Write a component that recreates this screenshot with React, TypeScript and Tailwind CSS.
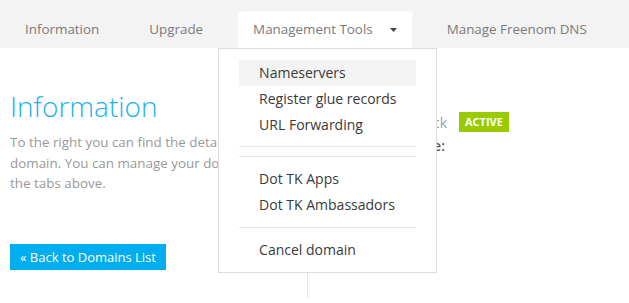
import React from "react";

const Caret = () => (
  <svg width="7" height="4" viewBox="0 0 7 4" className="block">
    <polygon points="0,0 7,0 3.5,4" fill="#444" />
  </svg>
);

const Item = ({ children, active }: { children: React.ReactNode; active?: boolean }) => (
  <div className={`h-[26px] leading-[26px] pl-[20px] text-[14px] whitespace-nowrap text-[#3a3a3a] ${active ? "bg-[#f3f3f3]" : ""}`}>
    {children}
  </div>
);

const tab = "h-[37px] px-[15px] flex items-center text-[13.4px] whitespace-nowrap text-[#7a7a7a]";

export default function App() {
  return (
    <div className="w-[629px] h-[303px] overflow-hidden bg-white" style={{ fontFamily: '"Open Sans", "Liberation Sans", sans-serif' }}>
      <div className="bg-[#f3f3f3] h-[48px] flex items-end gap-[20px] px-[10px]">
        <div className={tab}>Information</div>
        <div className={tab}>Upgrade</div>
        <div className={`relative bg-white rounded-t-[4px] ${tab}`}>
          <span>Management Tools</span>
          <span className="ml-[17px]">
            <Caret />
          </span>
          <div className="absolute top-full left-[-20px] w-[219px] z-10 bg-white border border-[#dcdcdc] px-[20px] pt-[11px] pb-[9px]">
            <Item active>Nameservers</Item>
            <Item>Register glue records</Item>
            <Item>URL Forwarding</Item>
            <div className="h-px bg-[#e5e5e5] mt-[8px]" />
            <div className="h-px bg-[#e5e5e5] mt-[9px]" />
            <div className="mt-[9px]">
              <Item>Dot TK Apps</Item>
              <Item>Dot TK Ambassadors</Item>
            </div>
            <div className="h-px bg-[#e5e5e5] mt-[9px]" />
            <div className="mt-[9px]">
              <Item>Cancel domain</Item>
            </div>
          </div>
        </div>
        <div className={tab}>Manage Freenom DNS</div>
      </div>

      <div className="flex px-[10px]">
        <div className="w-[297px] pb-[28px]">
          <h1 className="mt-[40px] text-[28px] leading-[36px] font-light text-[#1eb1ef]">Information</h1>
          <p className="mt-[8px] w-[297px] text-[13.4px] leading-[20.5px] text-[#999]">
            To the right you can find the details of your domain. You can manage your domain through the tabs above.
          </p>
          <div className="mt-[50px] inline-block bg-[#00adee] text-white text-[13px] h-[26px] leading-[26px] px-[10px] whitespace-nowrap">
            « Back to Domains List
          </div>
        </div>
        <div className="flex-1 border-l border-[#e5e5e5] pl-[20px]">
          <div className="mt-[64px] flex items-center gap-[12px] h-[20px]">
            <span className="w-[119px] text-right text-[14px] text-[#a09ab8] whitespace-nowrap">Domain lock</span>
            <span className="h-[20px] leading-[20px] px-[6px] bg-[#99cc00] text-white text-[11px] font-bold">ACTIVE</span>
          </div>
          <div className="mt-[3px] h-[20px] leading-[20px]">
            <span className="inline-block w-[117px] text-right text-[14px] font-semibold text-[#555] whitespace-nowrap">Expiry date:</span>
          </div>
        </div>
      </div>
    </div>
  );
}
